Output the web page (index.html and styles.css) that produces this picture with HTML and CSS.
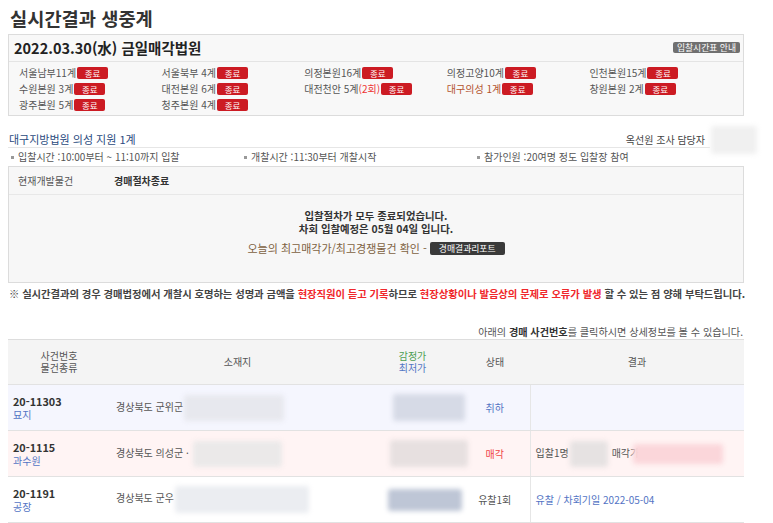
FILE: index.html
```html
<!DOCTYPE html>
<html lang="ko">
<head>
<meta charset="utf-8">
<title>실시간결과 생중계</title>
<link rel="stylesheet" href="styles.css">
</head>
<body>
<div class="page">
  <h1 class="title">실시간결과 생중계</h1>

  <section class="today">
    <div class="today-head">
      <span class="today-date">2022.03.30(水) 금일매각법원</span>
      <span class="btn-gray">입찰시간표 안내</span>
    </div>
    <ul class="court-grid">
      <li>서울남부11계<span class="badge">종료</span></li>
      <li>서울북부 4계<span class="badge">종료</span></li>
      <li>의정본원16계<span class="badge">종료</span></li>
      <li>의정고양10계<span class="badge">종료</span></li>
      <li>인천본원15계<span class="badge">종료</span></li>
      <li>수원본원 3계<span class="badge">종료</span></li>
      <li>대전본원 6계<span class="badge">종료</span></li>
      <li>대전천안 5계<span class="red">(2회)</span><span class="badge">종료</span></li>
      <li class="current">대구의성 1계<span class="badge">종료</span></li>
      <li>창원본원 2계<span class="badge">종료</span></li>
      <li>광주본원 5계<span class="badge">종료</span></li>
      <li>청주본원 4계<span class="badge">종료</span></li>
    </ul>
  </section>

  <div class="court-head">
    <span class="court-name">대구지방법원 의성 지원 1계</span>
    <span class="staff">옥선원 조사 담당자</span>
    <span class="blur staff-blur"></span>
  </div>
  <ul class="info-row">
    <li>입찰시간 :10:00부터 ~ 11:10까지 입찰</li>
    <li>개찰시간 :11:30부터 개찰시작</li>
    <li>참가인원 :20여명 정도 입찰장 참여</li>
  </ul>

  <section class="status-box">
    <div class="status-head">
      <span class="status-label">현재개발물건</span>
      <b class="status-value">경매절차종료</b>
    </div>
    <div class="status-body">
      <p class="done">입찰절차가 모두 종료되었습니다.<br>차회 입찰예정은 05월 04일 입니다.</p>
      <p class="report">오늘의 최고매각가/최고경쟁물건 확인 - <span class="btn-dark">경매결과리포트</span></p>
    </div>
  </section>

  <p class="notice">※ 실시간결과의 경우 경매법정에서 개찰시 호명하는 성명과 금액을 <span class="red">현장직원이 듣고 기록</span>하므로 <span class="red">현장상황이나 발음상의 문제로 오류가 발생</span> 할 수 있는 점 양해 부탁드립니다.</p>

  <p class="hint">아래의 <b>경매 사건번호</b>를 클릭하시면 상세정보를 볼 수 있습니다.</p>

  <table class="results">
    <colgroup>
      <col class="c1"><col class="c2"><col class="c3"><col class="c4"><col class="c5">
    </colgroup>
    <thead>
      <tr>
        <th><span class="th-line">사건번호</span><span class="th-line">물건종류</span></th>
        <th>소재지</th>
        <th><span class="th-line green">감정가</span><span class="th-line blue">최저가</span></th>
        <th>상태</th>
        <th>결과</th>
      </tr>
    </thead>
    <tbody>
      <tr class="row-blue">
        <td class="case"><b>20-11303</b><span class="kind">묘지</span></td>
        <td class="addr">경상북도 군위군<span class="blur addr-blur b1"></span></td>
        <td class="price"><span class="blur price-blur p1"></span></td>
        <td class="state blue">취하</td>
        <td class="result"></td>
      </tr>
      <tr class="row-pink">
        <td class="case"><b>20-1115</b><span class="kind">과수원</span></td>
        <td class="addr">경상북도 의성군 ·<span class="blur addr-blur b2"></span></td>
        <td class="price"><span class="blur price-blur p2"></span></td>
        <td class="state red">매각</td>
        <td class="result">입찰1명<span class="blur res-blur r1"></span>매각가<span class="blur res-blur r2"></span></td>
      </tr>
      <tr>
        <td class="case"><b>20-1191</b><span class="kind">공장</span></td>
        <td class="addr">경상북도 군우<span class="blur addr-blur b3"></span></td>
        <td class="price"><span class="blur price-blur p3"></span></td>
        <td class="state">유찰1회</td>
        <td class="result blue">유찰 / 차회기일 2022-05-04</td>
      </tr>
    </tbody>
  </table>
</div>
</body>
</html>
```

FILE: styles.css
```css
* { box-sizing: border-box; }

body {
  margin: 0;
  font-family: "Noto Sans CJK KR", "Noto Sans", sans-serif;
  color: #555;
  background: #fff;
  font-size: 10px;
  overflow: hidden;
}

ul { list-style: none; margin: 0; padding: 0; }
p { margin: 0; }

.page {
  width: 736px;
  margin-left: 8px;
  padding-top: 5px;
}

.red { color: #f02c2c; }
.blue { color: #5374c4; }
.green { color: #4d9e52; }

.title {
  margin: 0;
  padding-left: 2px;
  font-size: 18.7px;
  line-height: 26px;
  font-weight: bold;
  color: #333;
}

/* today box */
.today {
  margin-top: 3px;
  border: 1px solid #dcdcdc;
  background: #f8f8f8;
}
.today-head {
  height: 27px;
  display: flex;
  align-items: center;
  justify-content: space-between;
  padding: 0 3px 0 5px;
  border-bottom: 1px solid #e4e4e4;
}
.today-date {
  font-size: 14.5px;
  font-weight: bold;
  color: #222;
  line-height: 20px;
}
.btn-gray {
  background: #707070;
  color: #fff;
  font-size: 8.8px;
  line-height: 11px;
  padding: 0 4px;
  border-radius: 2px;
  margin-top: -1px;
}

.court-grid {
  display: grid;
  grid-template-columns: repeat(5, 142.6px);
  padding: 3px 0 2px 10px;
}
.court-grid li {
  line-height: 16px;
  height: 16px;
  font-size: 10px;
  color: #555;
  white-space: nowrap;
  display: flex;
  align-items: center;
}
.court-grid li.current { color: #b3522e; }
.court-grid .red { color: #ee3333; }
.badge {
  display: inline-block;
  margin-left: 1px;
  width: 31px;
  height: 12px;
  line-height: 12px;
  text-align: center;
  background: #cc1b23;
  color: #fff;
  font-size: 8.5px;
  border-radius: 2px;
}

/* court head */
.court-head {
  margin-top: 16px;
  height: 16px;
  display: flex;
  align-items: center;
  border-bottom: 1px solid #e6e6e6;
  width: 702px;
  padding-left: 1px;
  position: relative;
}
.court-name {
  font-size: 11px;
  color: #2b4b80;
  line-height: 15px;
  flex: 1;
}
.staff {
  font-size: 10px;
  color: #444;
  line-height: 15px;
  margin-right: 5px;
}
.blur {
  display: inline-block;
  filter: blur(2.5px);
  vertical-align: middle;
  border-radius: 3px;
}
.staff-blur {
  position: absolute;
  right: -47px;
  top: -6px;
  width: 46px;
  height: 28px;
  background: #f0f0f0;
}

.info-row {
  margin-top: 1px;
  display: grid;
  grid-template-columns: 233px 233px 233px;
  padding-left: 3px;
  line-height: 16px;
  font-size: 10px;
  color: #555;
}
.info-row li::before {
  content: "";
  display: inline-block;
  width: 3px;
  height: 3px;
  background: #999;
  margin: 0 4px 2px 0;
  vertical-align: middle;
}

/* status box */
.status-box {
  margin-top: 1px;
  border: 1px solid #dcdcdc;
  background: #f7f7f7;
}
.status-head {
  height: 28px;
  line-height: 27px;
  border-bottom: 1px solid #e8e8e8;
  padding-left: 9px;
  font-size: 10px;
  display: flex;
}
.status-label { color: #555; width: 96px; }
.status-value { color: #333; font-weight: bold; }
.status-body {
  height: 87px;
  padding-top: 14px;
  text-align: center;
}
.done {
  font-size: 10.4px;
  font-weight: bold;
  color: #333;
  line-height: 13px;
}
.report {
  margin-top: 6px;
  font-size: 11px;
  line-height: 14px;
  color: #7e6242;
}
.btn-dark {
  display: inline-block;
  background: #3a3a3a;
  color: #fff;
  font-size: 8.8px;
  line-height: 13px;
  padding: 0 9px;
  border-radius: 2px;
  vertical-align: top;
  margin-top: 1px;
}

.notice {
  margin-top: 4px;
  padding-left: 1px;
  font-size: 10.35px;
  line-height: 14px;
  font-weight: bold;
  color: #444;
  white-space: nowrap;
  letter-spacing: -0.05px;
}
.notice .red { color: #f0282c; }

.hint {
  margin-top: 24px;
  text-align: right;
  font-size: 10.15px;
  line-height: 14px;
  color: #555;
  padding-right: 1px;
  white-space: nowrap;
}
.hint b { color: #333; }

/* table */
.results {
  width: 736px;
  border-collapse: collapse;
  table-layout: fixed;
  border-top: 1px solid #dddddd;
}
.c1 { width: 102px; }
.c2 { width: 255px; }
.c3 { width: 95px; }
.c4 { width: 70px; }
.c5 { width: 214px; }

.results th {
  height: 45px;
  background: #f4f4f4;
  font-weight: normal;
  font-size: 10px;
  line-height: 12px;
  color: #555;
  border-bottom: 1px solid #e2e2e2;
  padding: 0;
}
.th-line { display: block; height: 12px; line-height: 12px; }
.results td {
  height: 46px;
  border-bottom: 1px solid #e2e2e2;
  font-size: 10px;
  color: #555;
  padding: 0;
  white-space: nowrap;
  overflow: visible;
}
.row-blue td { background: #f5f6fe; }
.row-pink td { background: #fff4f4; }

.case { padding-left: 5px !important; }
.case b {
  display: block;
  font-size: 10.8px;
  line-height: 14px;
  height: 14px;
  color: #333;
  margin-top: 1px;
}
.case .kind { display: block; color: #5374c4; line-height: 14px; height: 14px; }

.addr { padding-left: 6px !important; }
.addr-blur { height: 26px; }
.b1 { width: 100px; background: #e7e8ee; margin-left: 1px; }
.b2 { width: 89px; background: #ebe9e9; margin-left: 4px; }
.b3 { width: 134px; height: 27px; background: #ebedf1; margin-left: 1px; }

.price { padding-left: 25px !important; }
.price-blur { width: 74px; height: 27px; }
.p1 { background: #d6dae6; margin-left: 3px; width: 72px; }
.p2 { background: #e7e0e0; width: 78px; }
.p3 { background: #bec6d6; margin-left: -2px; height: 22px; }

.state { text-align: center; }
.state.red { color: #f04444; }
.state.blue { color: #5374c4; }

.result {
  border-left: 1px solid #e6e6e6;
  padding-left: 5px !important;
}
.result.blue { color: #5374c4; }
.res-blur { height: 26px; }
.r1 { width: 38px; background: #e6e2e2; margin: 0 4px 0 1px; }
.r2 { width: 90px; height: 20px; background: #fbd6da; margin-left: -6px; }
```
